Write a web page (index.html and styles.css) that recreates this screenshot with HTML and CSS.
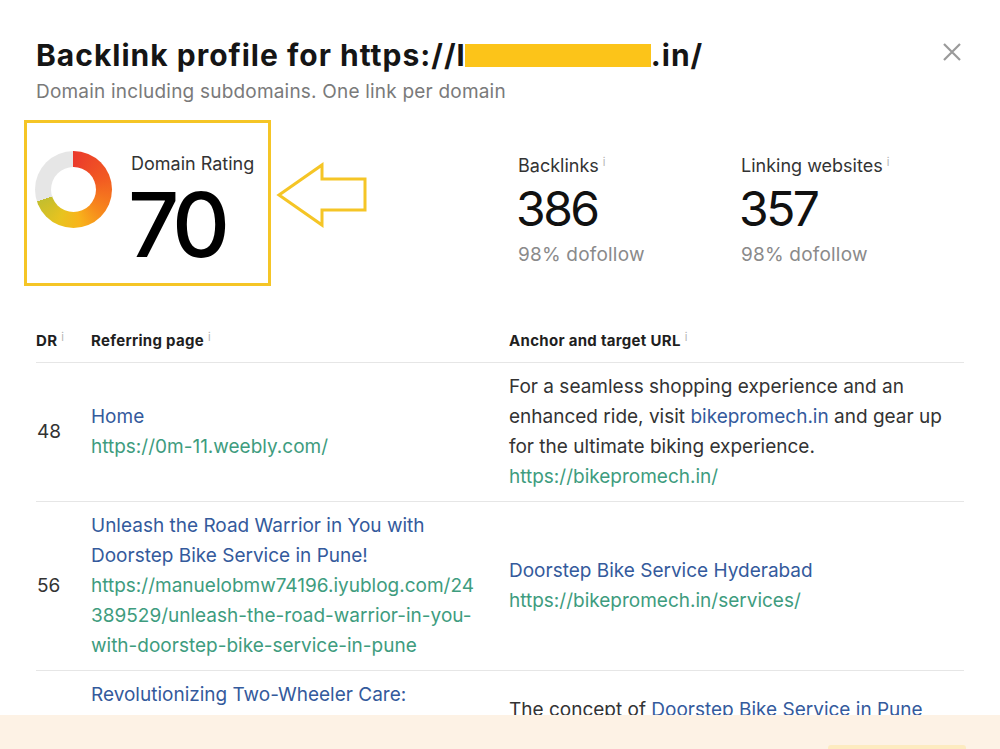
FILE: index.html
```html
<!DOCTYPE html>
<html>
<head>
<meta charset="utf-8">
<link rel="stylesheet" href="styles.css">
</head>
<body>
<div class="modal">
  <div class="head">
    <div>
      <h1 class="title">Backlink profile for https://l<span class="redact"></span>.in/</h1>
      <p class="subtitle">Domain including subdomains. One link per domain</p>
    </div>
    <svg class="close" width="20" height="20" viewBox="0 0 20 20"><path d="M2 2 L18 18 M18 2 L2 18" stroke="#9a9a9a" stroke-width="2.2" fill="none"/></svg>
  </div>

  <div class="stats">
    <div class="dr-box">
      <div class="donut"></div>
      <div class="dr-text">
        <div class="label">Domain Rating</div>
        <div class="dr-value">70</div>
      </div>
    </div>
    <svg class="arrow" width="92" height="68" viewBox="0 0 92 68"><path d="M3 34 L46 4 L46 18 L89 18 L89 49 L46 49 L46 64 Z" fill="none" stroke="#f5c526" stroke-width="3" stroke-linejoin="miter"/></svg>
    <div class="stat stat-backlinks">
      <div class="label">Backlinks<sup class="info">i</sup></div>
      <div class="stat-value">386</div>
      <div class="stat-sub">98% dofollow</div>
    </div>
    <div class="stat">
      <div class="label">Linking websites<sup class="info">i</sup></div>
      <div class="stat-value">357</div>
      <div class="stat-sub">98% dofollow</div>
    </div>
  </div>

  <div class="table">
    <div class="row header">
      <div class="cell">DR<sup class="info">i</sup></div>
      <div class="cell">Referring page<sup class="info">i</sup></div>
      <div class="cell">Anchor and target URL<sup class="info">i</sup></div>
    </div>
    <div class="row">
      <div class="cell dr">48</div>
      <div class="cell">
        <div class="link">Home</div>
        <div class="url">https://0m-11.weebly.com/</div>
      </div>
      <div class="cell">
        <div class="text">For a seamless shopping experience and an enhanced ride, visit <span class="link">bikepromech.in</span> and gear up for the ultimate biking experience.</div>
        <div class="url">https://bikepromech.in/</div>
      </div>
    </div>
    <div class="row">
      <div class="cell dr">56</div>
      <div class="cell">
        <div class="link">Unleash the Road Warrior in You with Doorstep Bike Service in Pune!</div>
        <div class="url">https://manuelobmw74196.iyublog.com/24389529/unleash-the-road-warrior-in-you-with-doorstep-bike-service-in-pune</div>
      </div>
      <div class="cell">
        <div class="link">Doorstep Bike Service Hyderabad</div>
        <div class="url">https://bikepromech.in/services/</div>
      </div>
    </div>
    <div class="row">
      <div class="cell dr">61</div>
      <div class="cell">
        <div class="link">Revolutionizing Two-Wheeler Care: Convenience at Your Doorstep</div>
        <div class="url">https://bikecare.blog.com/revolutionizing-care</div>
      </div>
      <div class="cell">
        <div class="text">The concept of <span class="link">Doorstep Bike Service in Pune</span> revolutionized care.</div>
        <div class="url">https://bikepromech.in/</div>
      </div>
    </div>
  </div>
</div>
<div class="banner"><div class="banner-btn"></div></div>
</body>
</html>
```

FILE: styles.css
```css
html, body {
  margin: 0;
  padding: 0;
  background: #ffffff;
  height: 749px;
  overflow: hidden;
}
body {
  font-family: "Inter", "Liberation Sans", sans-serif;
  color: #333333;
}
.modal {
  padding: 36px 36px 0 36px;
}
.head {
  display: flex;
  justify-content: space-between;
  align-items: flex-start;
}
.title {
  margin: 0;
  font-size: 30px;
  line-height: 38px;
  font-weight: 700;
  color: #151515;
  letter-spacing: 1px;
}
.redact {
  display: inline-block;
  width: 186px;
  height: 23px;
  background: #fcc419;
  vertical-align: -1px;
  margin-left: -1px;
}
.subtitle {
  margin: 6px 0 0 0;
  font-size: 19px;
  line-height: 24px;
  color: #7a7a7a;
  letter-spacing: 0.2px;
}
.close {
  margin-top: 6px;
  margin-right: 2px;
}
.stats {
  display: flex;
  align-items: flex-start;
  margin-top: 16px;
  margin-left: -12px;
}
.dr-box {
  box-sizing: border-box;
  width: 247px;
  height: 166px;
  border: 3px solid #f5c526;
  display: flex;
  align-items: flex-start;
}
.donut {
  position: relative;
  width: 77px;
  height: 77px;
  border-radius: 50%;
  margin: 28px 0 0 8px;
  background: conic-gradient(#ea3a2c 0deg, #f25a22 70deg, #f7891c 130deg, #f8b41b 170deg, #e8c31f 205deg, #c3be2e 252deg, #e6e6e6 252deg, #e6e6e6 360deg);
}
.donut::after {
  content: "";
  position: absolute;
  left: 16px;
  top: 16px;
  width: 45px;
  height: 45px;
  border-radius: 50%;
  background: #ffffff;
}
.dr-text {
  margin: 29px 0 0 19px;
}
.label {
  font-size: 18px;
  line-height: 24px;
  color: #333333;
}
.dr-value {
  font-size: 90px;
  line-height: 80px;
  margin-top: 9px;
  color: #000000;
  font-weight: 500;
  letter-spacing: -6px;
  margin-left: -3px;
}
.arrow {
  margin: 41px 0 0 5px;
}
.stat {
  margin-top: 34px;
}
.stat-backlinks {
  margin-left: 150px;
  width: 223px;
}
.stat-value {
  font-size: 48px;
  line-height: 50px;
  margin-top: 6px;
  color: #111111;
  letter-spacing: -2.5px;
  margin-left: -2px;
}
.stat-sub {
  font-size: 19px;
  line-height: 24px;
  margin-top: 9px;
  color: #8a8a8a;
  letter-spacing: 0.2px;
}
.info {
  font-size: 11px;
  color: #b5b5b5;
  margin-left: 4px;
  vertical-align: 6px;
  line-height: 0;
  font-weight: 400;
}
.table {
  margin-top: 36px;
  width: 928px;
}
.row {
  display: grid;
  grid-template-columns: 55px 418px 1fr;
  align-items: center;
  border-bottom: 1px solid #e6e6e6;
  padding: 9px 0 9px 0;
  font-size: 19px;
  line-height: 30px;
}
.row.header {
  font-size: 15px;
  font-weight: 700;
  color: #1f1f1f;
  line-height: 20px;
  padding: 9px 0 11px 0;
  letter-spacing: 0.3px;
}
.row.header .info {
  vertical-align: 5px;
}
.cell.dr {
  padding-left: 1px;
}
.row .cell:nth-child(2) {
  padding-right: 28px;
}
.row .cell:nth-child(3) {
  padding-right: 4px;
}
.link {
  color: #345a9c;
}
.url {
  color: #3e9c7e;
  overflow-wrap: anywhere;
}
.text {
  color: #333333;
}
.banner {
  position: fixed;
  left: 0;
  right: 0;
  top: 715px;
  height: 34px;
  background: #fdf2e5;
}
.banner-btn {
  position: absolute;
  left: 828px;
  top: 30px;
  width: 138px;
  height: 10px;
  background: #fdebc0;
  border-radius: 3px;
}
```
